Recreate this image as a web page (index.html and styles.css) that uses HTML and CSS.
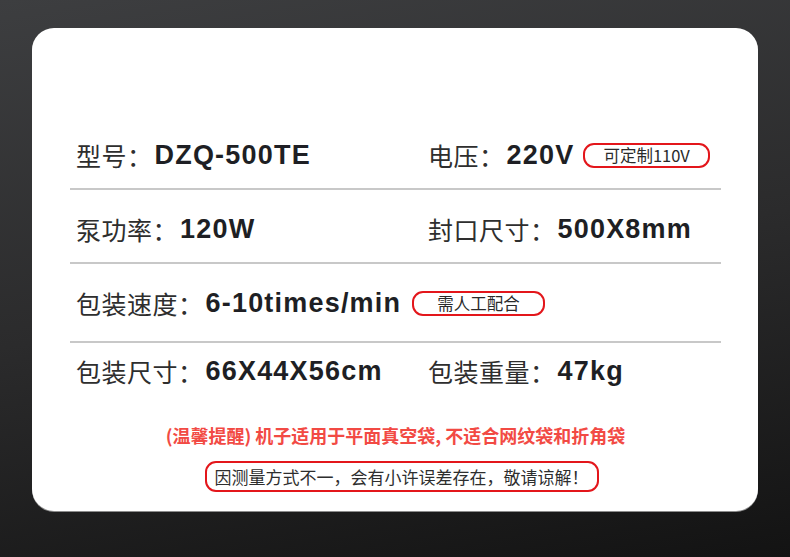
FILE: index.html
```html
<!DOCTYPE html>
<html lang="zh-CN">
<head>
  <meta charset="UTF-8">
  <meta name="viewport" content="width=device-width, initial-scale=1.0">
  <title>产品参数</title>
  <link rel="stylesheet" href="styles.css">
</head>
<body>
  <div class="card">
    <!-- Spec rows -->
    <div class="specs">
      <div class="row row-first">
        <div class="cell"><span class="label">型号：</span><span class="value">DZQ-500TE</span></div>
        <div class="cell"><span class="label">电压：</span><span class="value">220V</span><span class="badge badge-volt">可定制110V</span></div>
      </div>
      <div class="row">
        <div class="cell"><span class="label">泵功率：</span><span class="value">120W</span></div>
        <div class="cell"><span class="label">封口尺寸：</span><span class="value">500X8mm</span></div>
      </div>
      <div class="row row-tall">
        <div class="cell cell-wide"><span class="label">包装速度：</span><span class="value">6-10times/min</span><span class="badge badge-speed">需人工配合</span></div>
      </div>
      <div class="row row-last">
        <div class="cell"><span class="label">包装尺寸：</span><span class="value">66X44X56cm</span></div>
        <div class="cell"><span class="label">包装重量：</span><span class="value">47kg</span></div>
      </div>
    </div>

    <!-- Notes -->
    <div class="notes">
      <p class="warning">(温馨提醒) 机子适用于平面真空袋, 不适合网纹袋和折角袋</p>
      <p class="disclaimer">因测量方式不一，会有小许误差存在，敬请谅解！</p>
    </div>
  </div>
</body>
</html>
```

FILE: styles.css
```css
html, body {
  margin: 0;
  padding: 0;
}
body {
  width: 790px;
  height: 557px;
  overflow: hidden;
  background: linear-gradient(170deg, #3d3e40 0%, #2b2b2c 50%, #131313 100%);
  font-family: "Liberation Sans", "Noto Sans CJK SC", sans-serif;
  padding: 28px 0 0 32px;
  box-sizing: border-box;
}
.card {
  width: 726px;
  height: 483px;
  box-sizing: border-box;
  background: #fff;
  border-radius: 22px;
  box-shadow: 0 1px 0 #8c8c8c;
  padding: 88px 37px 0 38px;
}
.specs {
  display: flex;
  flex-direction: column;
}
.row {
  display: grid;
  grid-template-columns: 352px 1fr;
  align-items: center;
  padding: 24px 0 18px 6px;
  height: 30px;
  border-bottom: 2px solid #c8c8c8;
}
.row-first {
  padding-bottom: 18px;
}
.row-tall {
  padding-bottom: 23px;
}
.row-last {
  padding-top: 13px;
  border-bottom: none;
}
.cell {
  display: flex;
  align-items: center;
  white-space: nowrap;
}
.cell-wide {
  grid-column: 1 / 3;
}
.label {
  font-family: "Noto Sans CJK SC", sans-serif;
  font-size: 25px;
  letter-spacing: 0.5px;
  color: #2e2e2e;
  line-height: 30px;
}
.value {
  font-family: "Liberation Sans", Arial, sans-serif;
  font-weight: bold;
  font-size: 27px;
  letter-spacing: 1.2px;
  color: #1e1f24;
  line-height: 30px;
  margin-left: 2px;
}
.badge {
  font-family: "Noto Sans CJK SC", sans-serif;
  font-size: 16.5px;
  color: #2a2a2a;
  border: 2px solid #e3161b;
  border-radius: 11px;
  height: 21px;
  line-height: 21px;
  padding: 0 18px;
}
.badge-volt {
  margin-left: 9px;
}
.badge-speed {
  margin-left: 11px;
  padding: 0 23px;
}
.notes {
  display: flex;
  flex-direction: column;
  align-items: center;
  margin-top: 19px;
}
.notes p {
  margin: 0;
  font-family: "Noto Sans CJK SC", sans-serif;
}
.warning {
  font-size: 18px;
  font-weight: bold;
  color: #f24a44;
  line-height: 24px;
}
.disclaimer {
  margin-top: 14px !important;
  margin-left: 12px !important;
  font-size: 17px;
  color: #2e2e2e;
  border: 2px solid #e3161b;
  border-radius: 11px;
  height: 27px;
  line-height: 27px;
  padding: 0 8px;
}
```
